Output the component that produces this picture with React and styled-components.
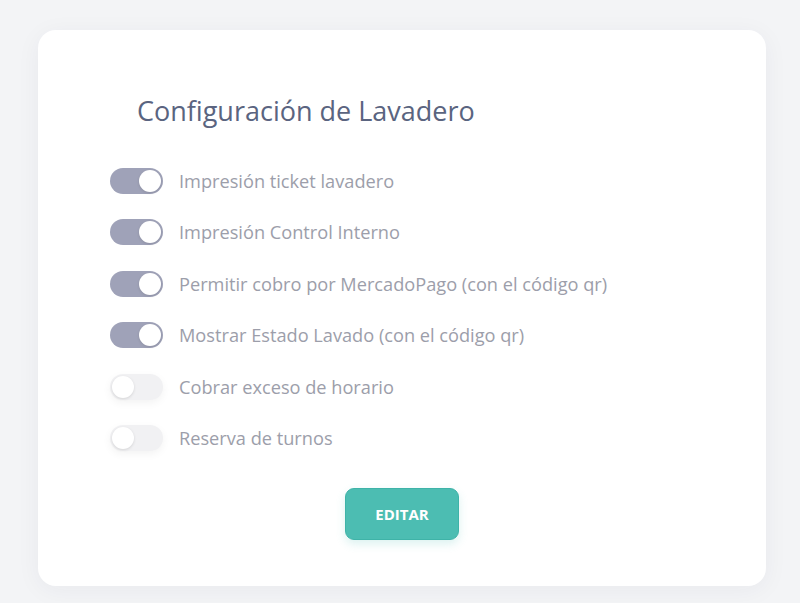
import React, { useState } from "react";
import styled, { createGlobalStyle } from "styled-components";

const GlobalStyle = createGlobalStyle`
  html, body {
    margin: 0;
    padding: 0;
    background: #f3f4f6;
    font-family: "Open Sans", "Noto Sans", sans-serif;
  }
`;

const Page = styled.div`
  width: 800px;
  height: 603px;
  padding: 30px 34px 17px 38px;
  box-sizing: border-box;
`;

const Card = styled.div`
  background: #ffffff;
  border-radius: 18px;
  height: 556px;
  box-sizing: border-box;
  padding: 63px 0 0 72px;
  box-shadow: 0 4px 24px rgba(30, 40, 70, 0.05);
`;

const Title = styled.h2`
  margin: 0 0 39px 27px;
  font-size: 27px;
  font-weight: 400;
  color: #5a6480;
  line-height: 36px;
`;

const List = styled.div`
  display: flex;
  flex-direction: column;
  gap: 25.4px;
`;

const Row = styled.label`
  display: flex;
  align-items: center;
  gap: 16px;
  height: 26px;
  cursor: pointer;
`;

const Track = styled.span`
  position: relative;
  width: 53px;
  height: 26px;
  border-radius: 13px;
  background: ${(p) => (p.$on ? "#9fa2b8" : "#f1f1f3")};
  box-shadow: ${(p) =>
    p.$on ? "none" : "0 3px 8px rgba(0, 0, 0, 0.05)"};
  flex-shrink: 0;
`;

const Knob = styled.span`
  position: absolute;
  top: 2px;
  left: ${(p) => (p.$on ? "29px" : "2px")};
  width: 22px;
  height: 22px;
  border-radius: 50%;
  background: #ffffff;
  box-shadow: 0 1px 3px rgba(0, 0, 0, 0.12);
`;

const Label = styled.span`
  font-size: 18.2px;
  color: #9c9eaa;
`;

const Footer = styled.div`
  display: flex;
  justify-content: center;
  margin: 37px 0 0 -72px;
`;

const Button = styled.button`
  width: 114px;
  height: 52px;
  border: 1px solid #3fb3a8;
  border-radius: 9px;
  background: #4cbdb2;
  color: #ffffff;
  font-family: "Open Sans", sans-serif;
  font-weight: 700;
  font-size: 15px;
  box-shadow: 0 4px 10px rgba(76, 189, 178, 0.2);
  cursor: pointer;
`;

const initial = [
  { label: "Impresión ticket lavadero", on: true },
  { label: "Impresión Control Interno", on: true },
  { label: "Permitir cobro por MercadoPago (con el código qr)", on: true },
  { label: "Mostrar Estado Lavado (con el código qr)", on: true },
  { label: "Cobrar exceso de horario", on: false },
  { label: "Reserva de turnos", on: false },
];

const App = () => {
  const [opts, setOpts] = useState(initial);
  const toggle = (i) =>
    setOpts((o) => o.map((x, j) => (j === i ? { ...x, on: !x.on } : x)));

  return (
    <Page>
      <GlobalStyle />
      <Card>
        <Title>Configuración de Lavadero</Title>
        <List>
          {opts.map((o, i) => (
            <Row key={o.label} onClick={() => toggle(i)}>
              <Track $on={o.on}>
                <Knob $on={o.on} />
              </Track>
              <Label>{o.label}</Label>
            </Row>
          ))}
        </List>
        <Footer>
          <Button>EDITAR</Button>
        </Footer>
      </Card>
    </Page>
  );
};

export default App;
